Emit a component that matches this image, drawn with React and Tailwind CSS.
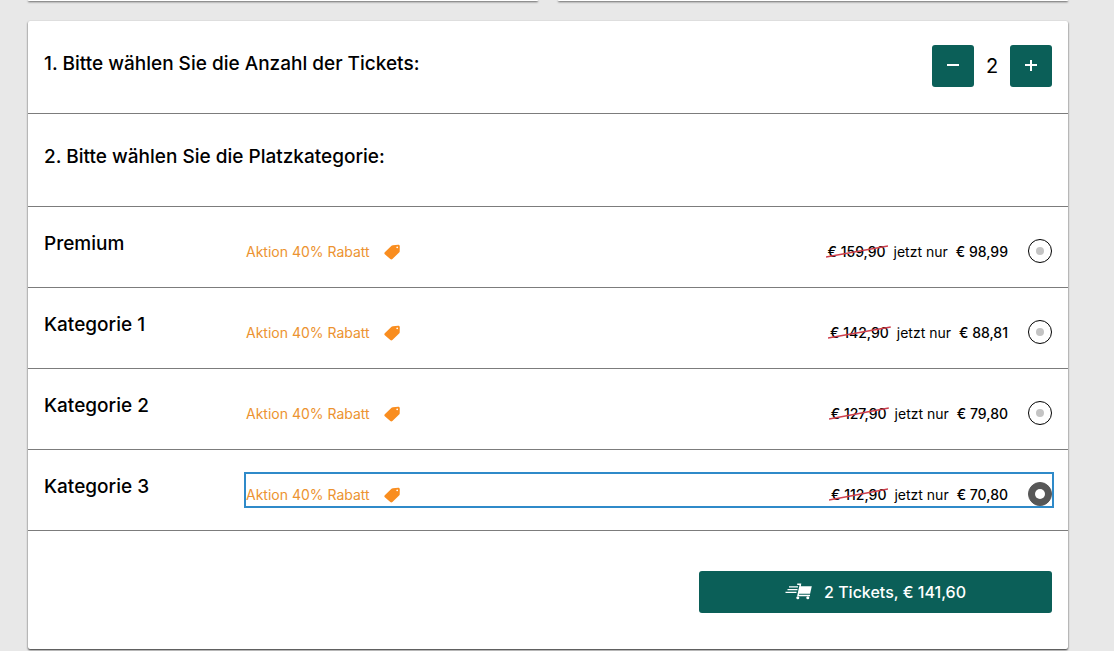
import { useState } from 'react';

const categories = [
  { id: 'premium', name: 'Premium', oldPrice: 159.9, price: 98.99 },
  { id: 'kat1', name: 'Kategorie 1', oldPrice: 142.9, price: 88.81 },
  { id: 'kat2', name: 'Kategorie 2', oldPrice: 127.9, price: 79.8 },
  { id: 'kat3', name: 'Kategorie 3', oldPrice: 112.9, price: 70.8 }
];

const formatPrice = (value) => `€ ${value.toFixed(2).replace('.', ',')}`;

function TagIcon() {
  return (
    <svg width="16" height="16" viewBox="0 0 16 16" aria-hidden="true">
      <path
        fill="#f98d1f"
        fillRule="evenodd"
        d="M8.8 1.2 14.2.7c1 0 1.6.5 1.6 1.500l-.1 5c0 .5-.2.9-.6 1.300L8.400 15c-.7.6-1.500.6-2.100 0L.8 10.200c-.6-.6-.6-1.400 0-2l6.700-6.500c.4-.3.8-.5 1.300-.5ZM13.200 2.400a.9.900 0 1 0 0 1.800.9.900 0 0 0 0-1.800Z"
      />
    </svg>
  );
}

function FastCartIcon() {
  return (
    <svg width="27" height="18" viewBox="0 0 27 18" aria-hidden="true" fill="none">
      <path d="M4 3.900h9M2.500 6.600h10M.5 9.300h11" stroke="white" strokeWidth="1.200" />
      <path d="M12.200 1.200h3.200l-.4 2.200-2 9.200h12" stroke="white" strokeWidth="1.500" />
      <path d="M14.800 3.200h12l-1.700 7.600H13.400Z" fill="white" />
      <circle cx="12.800" cy="14.800" r="1.500" fill="white" />
      <circle cx="22.800" cy="14.800" r="1.500" fill="white" />
    </svg>
  );
}

function OldPrice({ value }) {
  return (
    <s className="relative font-medium no-underline">
      {formatPrice(value)}
      <svg
        className="absolute -left-0.5 top-1 h-3.5 w-[calc(100%+4px)]"
        viewBox="0 0 62 14"
        preserveAspectRatio="none"
        aria-hidden="true"
      >
        <path d="M0 12 62 1" stroke="#cf3f4c" strokeWidth="1.500" />
      </svg>
    </s>
  );
}

function App() {
  const [count, setCount] = useState(2);
  const [selected, setSelected] = useState('kat3');

  const category = categories.find((c) => c.id === selected);

  return (
    <div className="min-h-screen bg-[#e8e8e8] pl-7 pr-[46px] font-['Inter','Liberation_Sans',sans-serif] text-black">
      {/* Lower edge of the teaser cards */}
      <div className="grid grid-cols-2 gap-5">
        <div className="h-px rounded-b-sm bg-white shadow-[0_1px_2px_rgba(0,0,0,0.8)]" />
        <div className="h-px rounded-b-sm bg-white shadow-[0_1px_2px_rgba(0,0,0,0.8)]" />
      </div>

      <main className="mt-5 rounded-xs bg-white shadow-[0_1px_2px_rgba(0,0,0,0.8)]">
        {/* Ticket count */}
        <section className="flex items-start justify-between border-b border-[#7c7c7c] px-4 pt-6 pb-[26px]">
          <h2 className="text-[19px] leading-[38px] font-medium">1. Bitte wählen Sie die Anzahl der Tickets:</h2>
          <div className="flex items-center">
            <button
              type="button"
              aria-label="Weniger Tickets"
              className="flex size-[42px] items-center justify-center rounded-[3px] bg-[#0b5f58] text-white"
              onClick={() => setCount((prev) => Math.max(1, prev - 1))}
            >
              <svg width="12" height="12" viewBox="0 0 12 12" aria-hidden="true">
                <path d="M0 5h12" stroke="white" strokeWidth="2" />
              </svg>
            </button>
            <span className="w-9 text-center text-[20px] leading-6">{count}</span>
            <button
              type="button"
              aria-label="Mehr Tickets"
              className="flex size-[42px] items-center justify-center rounded-[3px] bg-[#0b5f58] text-white"
              onClick={() => setCount((prev) => prev + 1)}
            >
              <svg width="12" height="12" viewBox="0 0 12 12" aria-hidden="true">
                <path d="M0 5h12M6 0v11" stroke="white" strokeWidth="2" />
              </svg>
            </button>
          </div>
        </section>

        {/* Seat category */}
        <section className="border-b border-[#7c7c7c] px-4 pt-6 pb-[30px]">
          <h2 className="text-[19px] leading-[38px] font-medium">2. Bitte wählen Sie die Platzkategorie:</h2>
        </section>

        {categories.map((c) => (
          <section key={c.id} className="flex items-start border-b border-[#7c7c7c] px-4 py-6">
            <h3 className="w-[202px] shrink-0 text-[19px] leading-[26px] font-medium">{c.name}</h3>
            <label className="flex h-8 flex-1 cursor-pointer items-end text-[14px] leading-[22px] outline-[#2f8ac9] has-checked:outline-2">
              <span className="text-[#ec9330]">Aktion 40% Rabatt</span>
              <span className="ml-3.5 flex h-[22px] items-center">
                <TagIcon />
              </span>
              <span className="ml-auto flex">
                <OldPrice value={c.oldPrice} />
                <span className="ml-2">jetzt nur</span>
                <span className="ml-2 font-medium">{formatPrice(c.price)}</span>
              </span>
              <input
                type="radio"
                name="category"
                aria-label={c.name}
                checked={selected === c.id}
                onChange={() => setSelected(c.id)}
                className="ml-5 grid size-6 appearance-none place-items-center rounded-full border border-black outline-none before:size-2 before:rounded-full before:bg-[#c4c4c4] checked:border-[#575757] checked:bg-[#575757] checked:before:size-2.5 checked:before:bg-white"
              />
            </label>
          </section>
        ))}

        <div className="flex justify-end px-4 pt-10 pb-9">
          <button
            type="button"
            className="flex h-[42px] w-[353px] items-center justify-center gap-3 rounded-[3px] bg-[#0b5f58] text-[16px] leading-6 font-medium text-white"
          >
            <FastCartIcon />
            <span>{count} Tickets, {formatPrice(category.price * count)}</span>
          </button>
        </div>
      </main>
    </div>
  );
}

export default App;
